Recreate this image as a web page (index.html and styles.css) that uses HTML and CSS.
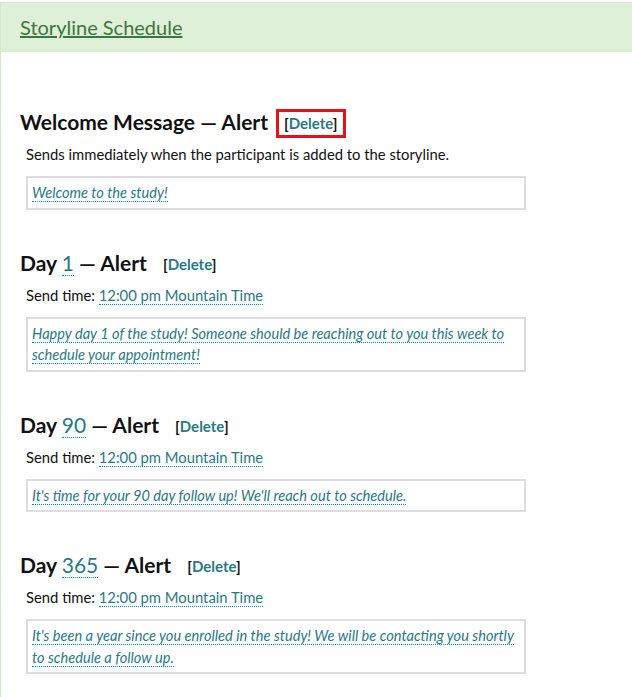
FILE: index.html
```html
<!DOCTYPE html>
<html lang="en">
<head>
    <meta charset="UTF-8">
    <title>Storyline Schedule</title>
    <link rel="stylesheet" href="styles.css">
</head>
<body>

<div class="panel">
    <div class="panel-heading">
        <a class="panel-title" href="#">Storyline Schedule</a>
    </div>

    <div class="panel-body">
        <!-- welcome message -->
        <div class="alert-item">
            <h3 class="alert-title">Welcome Message &mdash; Alert <span class="delete-link highlighted">[<a href="#">Delete</a>]</span></h3>
            <p class="alert-info">Sends immediately when the participant is added to the storyline.</p>
            <div class="message-box"><a class="editable" href="#">Welcome to the study!</a></div>
        </div>

        <div class="alert-item">
            <h3 class="alert-title">Day <a class="editable day-num" href="#">1</a> &mdash; Alert <span class="delete-link">[<a href="#">Delete</a>]</span></h3>
            <p class="alert-info">Send time: <a class="editable" href="#">12:00 pm Mountain Time</a></p>
            <div class="message-box"><a class="editable" href="#">Happy day 1 of the study! Someone should be reaching out to you this week to schedule your appointment!</a></div>
        </div>

        <div class="alert-item">
            <h3 class="alert-title">Day <a class="editable day-num" href="#">90</a> &mdash; Alert <span class="delete-link">[<a href="#">Delete</a>]</span></h3>
            <p class="alert-info">Send time: <a class="editable" href="#">12:00 pm Mountain Time</a></p>
            <div class="message-box"><a class="editable" href="#">It's time for your 90 day follow up! We'll reach out to schedule.</a></div>
        </div>

        <div class="alert-item">
            <h3 class="alert-title">Day <a class="editable day-num" href="#">365</a> &mdash; Alert <span class="delete-link">[<a href="#">Delete</a>]</span></h3>
            <p class="alert-info">Send time: <a class="editable" href="#">12:00 pm Mountain Time</a></p>
            <div class="message-box"><a class="editable" href="#">It's been a year since you enrolled in the study! We will be contacting you shortly to schedule a follow up.</a></div>
        </div>
    </div>
</div>

</body>
</html>
```

FILE: styles.css
```css
body {
    margin: 2px 0 0 0;
    font-family: Lato, "Open Sans", sans-serif;
    font-size: 14.8px;
    color: #111;
    background: #fff;
    overflow-x: hidden;
}
.panel {
    border: 1px solid #d6e9c6;
    border-right: none;
    margin-right: -20px;
}
.panel-heading {
    background-color: #dff0d8;
    border-bottom: 1px solid #d6e9c6;
    padding: 11px 19px 9px;
    line-height: 26px;
}
.panel-title {
    font-size: 20px;
    color: #3c763d;
    text-decoration: underline;
}
.panel-body {
    padding: 56px 19px 20px;
}
.alert-item {
    margin-bottom: 39px;
}
.alert-title {
    font-size: 21px;
    font-weight: 700;
    margin: 0;
    line-height: 28px;
}
.delete-link {
    display: inline-block;
    font-size: 15px;
    margin-left: 3px;
    padding: 0 5px;
    vertical-align: 1px;
    border: 3px solid transparent;
    line-height: 23px;
}
.delete-link.highlighted {
    border-color: #e2141b;
}
.delete-link a {
    color: #2a7886;
    text-decoration: none;
}
.alert-info {
    margin: 5px 0 0 6px;
    line-height: 22px;
}
a.editable {
    color: #2a7886;
    text-decoration: none;
    border-bottom: 1px dotted #08c;
}
.day-num {
    font-weight: 400;
}
.message-box {
    width: 488px;
    margin: 11px 0 0 6px;
    border: 2px solid #ddd;
    padding: 4px 4px 4px;
    line-height: 21.5px;
    font-size: 14.6px;
    font-style: italic;
}
```
